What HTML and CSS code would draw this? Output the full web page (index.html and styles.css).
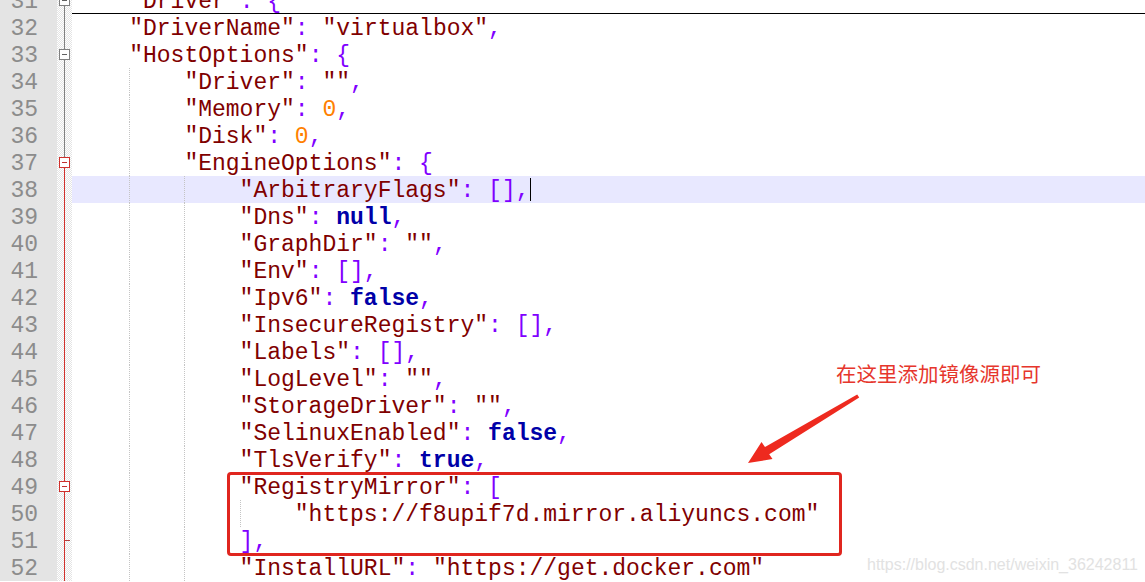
FILE: index.html
```html
<!DOCTYPE html>
<html lang="zh-CN">
<head>
    <meta charset="UTF-8">
    <meta name="viewport" content="width=device-width, initial-scale=1.0">
    <title>config.json - Notepad++</title>
    <link rel="stylesheet" href="styles.css">
</head>
<body>

    <div class="editor">
        <div class="nums">
            <div>31</div><div>32</div><div>33</div><div>34</div><div>35</div>
            <div>36</div><div>37</div><div>38</div><div>39</div><div>40</div>
            <div>41</div><div>42</div><div>43</div><div>44</div><div>45</div>
            <div>46</div><div>47</div><div>48</div><div>49</div><div>50</div>
            <div>51</div><div>52</div>
        </div>

        <div class="folds">
            <div class="fold"><span class="box plus"></span></div>
            <div class="fold"></div>
            <div class="fold"><span class="box"></span></div>
            <div class="fold"></div>
            <div class="fold"></div>
            <div class="fold"></div>
            <div class="fold start"><span class="box red"></span></div>
            <div class="fold hot"></div>
            <div class="fold hot"></div>
            <div class="fold hot"></div>
            <div class="fold hot"></div>
            <div class="fold hot"></div>
            <div class="fold hot"></div>
            <div class="fold hot"></div>
            <div class="fold hot"></div>
            <div class="fold hot"></div>
            <div class="fold hot"></div>
            <div class="fold hot"></div>
            <div class="fold hot"><span class="box red"></span></div>
            <div class="fold hot"></div>
            <div class="fold hot end"></div>
            <div class="fold hot"></div>
        </div>

        <div class="code">
            <div class="line folded"><span class="ind"></span><span class="s">"Driver"</span><span class="o">:</span> <span class="o">{</span></div>
            <div class="line"><span class="ind"></span><span class="s">"DriverName"</span><span class="o">:</span> <span class="s">"virtualbox"</span><span class="o">,</span></div>
            <div class="line"><span class="ind"></span><span class="s">"HostOptions"</span><span class="o">:</span> <span class="o">{</span></div>
            <div class="line"><span class="ind"></span><span class="ind g"></span><span class="s">"Driver"</span><span class="o">:</span> <span class="s">""</span><span class="o">,</span></div>
            <div class="line"><span class="ind"></span><span class="ind g"></span><span class="s">"Memory"</span><span class="o">:</span> <span class="n">0</span><span class="o">,</span></div>
            <div class="line"><span class="ind"></span><span class="ind g"></span><span class="s">"Disk"</span><span class="o">:</span> <span class="n">0</span><span class="o">,</span></div>
            <div class="line"><span class="ind"></span><span class="ind g"></span><span class="s">"EngineOptions"</span><span class="o">:</span> <span class="o">{</span></div>
            <div class="line current"><span class="ind"></span><span class="ind g"></span><span class="ind g"></span><span class="s">"ArbitraryFlags"</span><span class="o">:</span> <span class="o">[],</span><span class="caret"></span></div>
            <div class="line"><span class="ind"></span><span class="ind g"></span><span class="ind g"></span><span class="s">"Dns"</span><span class="o">:</span> <span class="k">null</span><span class="o">,</span></div>
            <div class="line"><span class="ind"></span><span class="ind g"></span><span class="ind g"></span><span class="s">"GraphDir"</span><span class="o">:</span> <span class="s">""</span><span class="o">,</span></div>
            <div class="line"><span class="ind"></span><span class="ind g"></span><span class="ind g"></span><span class="s">"Env"</span><span class="o">:</span> <span class="o">[],</span></div>
            <div class="line"><span class="ind"></span><span class="ind g"></span><span class="ind g"></span><span class="s">"Ipv6"</span><span class="o">:</span> <span class="k">false</span><span class="o">,</span></div>
            <div class="line"><span class="ind"></span><span class="ind g"></span><span class="ind g"></span><span class="s">"InsecureRegistry"</span><span class="o">:</span> <span class="o">[],</span></div>
            <div class="line"><span class="ind"></span><span class="ind g"></span><span class="ind g"></span><span class="s">"Labels"</span><span class="o">:</span> <span class="o">[],</span></div>
            <div class="line"><span class="ind"></span><span class="ind g"></span><span class="ind g"></span><span class="s">"LogLevel"</span><span class="o">:</span> <span class="s">""</span><span class="o">,</span></div>
            <div class="line"><span class="ind"></span><span class="ind g"></span><span class="ind g"></span><span class="s">"StorageDriver"</span><span class="o">:</span> <span class="s">""</span><span class="o">,</span></div>
            <div class="line"><span class="ind"></span><span class="ind g"></span><span class="ind g"></span><span class="s">"SelinuxEnabled"</span><span class="o">:</span> <span class="k">false</span><span class="o">,</span></div>
            <div class="line"><span class="ind"></span><span class="ind g"></span><span class="ind g"></span><span class="s">"TlsVerify"</span><span class="o">:</span> <span class="k">true</span><span class="o">,</span></div>
            <div class="line"><span class="ind"></span><span class="ind g"></span><span class="ind g"></span><span class="s">"RegistryMirror"</span><span class="o">:</span> <span class="o">[</span></div>
            <div class="line"><span class="ind"></span><span class="ind g"></span><span class="ind g"></span><span class="ind g"></span><span class="s">"https://f8upif7d.mirror.aliyuncs.com"</span></div>
            <div class="line"><span class="ind"></span><span class="ind g"></span><span class="ind g"></span><span class="o">],</span></div>
            <div class="line"><span class="ind"></span><span class="ind g"></span><span class="ind g"></span><span class="s">"InstallURL"</span><span class="o">:</span> <span class="s">"https://get.docker.com"</span></div>
        </div>
    </div>

    <!-- annotations drawn over the screenshot -->
    <div class="mark-box"></div>
    <div class="mark-text">在这里添加镜像源即可</div>
    <svg class="mark-arrow" width="130" height="85" viewBox="740 385 130 85">
        <polygon points="748,463 761.5,442 765,447 857.2,394.6 859.2,397.6 769.2,454.2 772.5,459" fill="#ee2a1f"/>
    </svg>
    <div class="watermark">https://blog.csdn.net/weixin_36242811</div>

</body>
</html>
```

FILE: styles.css
```css
* {
    margin: 0;
    padding: 0;
    box-sizing: border-box;
}

body {
    background: #fff;
    width: 1145px;
    height: 582px;
    overflow: hidden;
    position: relative;
    font-family: 'Liberation Mono', 'Courier New', monospace;
    font-size: 23px;
}

.editor {
    display: flex;
    margin-top: -13px;
    line-height: 31px;
}

/* line numbers */
.nums {
    width: 57px;
    background: #e4e4e4;
    color: #8c8c8c;
    text-align: right;
    padding-right: 19px;
}

.nums div {
    height: 27px;
}

/* fold margin */
.folds {
    width: 15px;
    background: repeating-conic-gradient(#e4e4e4 0 25%, #fff 0 50%) 0 0 / 2px 2px;
}

.fold {
    height: 27px;
    display: flex;
    align-items: center;
    justify-content: center;
    background: linear-gradient(#808080, #808080) 7px 0 / 1px 100% no-repeat;
}

.fold.start {
    background: linear-gradient(#808080, #808080) 7px 0 / 1px 50% no-repeat,
                linear-gradient(#d0302c, #d0302c) 7px 100% / 1px 50% no-repeat;
}

.fold.hot {
    background: linear-gradient(#d0302c, #d0302c) 7px 0 / 1px 100% no-repeat;
}

.fold.end {
    background: linear-gradient(#d0302c, #d0302c) 7px 0 / 1px 100% no-repeat,
                linear-gradient(#b04040, #b04040) 7px 13px / 6px 1px no-repeat;
}

.box {
    width: 11px;
    height: 11px;
    border: 1px solid #808080;
    background: #fff linear-gradient(#606060, #606060) center / 5px 1px no-repeat;
}

.box.plus {
    background: #fff linear-gradient(#606060, #606060) center / 5px 1px no-repeat,
                linear-gradient(#606060, #606060) center / 1px 5px no-repeat;
}

.box.red {
    border-color: #d0302c;
    background: #fff linear-gradient(#c03030, #c03030) center / 5px 1px no-repeat;
}

/* code area */
.code {
    flex: 1;
    padding-left: 2px;
}

.line {
    height: 27px;
    color: #800000;
    white-space: pre;
}

.line.folded {
    border-bottom: 1px solid #000;
    margin-left: -2px;
    padding-left: 2px;
}

.line.current {
    background: #e8e8ff;
    margin-left: -2px;
    padding-left: 2px;
}

.ind {
    display: inline-block;
    width: 4ch;
    height: 27px;
    vertical-align: top;
}

.ind.g {
    background: repeating-linear-gradient(#c4c4c4 0 1px, transparent 1px 2px) 0 0 / 1px 100% no-repeat;
}

.s { color: #800000; }
.o { color: #8000ff; }
.n { color: #ff8000; }
.k { color: #0000a8; font-weight: bold; }

.caret {
    display: inline-block;
    width: 1px;
    height: 23px;
    margin-top: 2px;
    vertical-align: top;
    background: #000;
}

/* annotations */
.mark-box {
    position: absolute;
    left: 227px;
    top: 472px;
    width: 615px;
    height: 84px;
    border: 3px solid #e0261f;
    border-radius: 4px;
}

.mark-text {
    position: absolute;
    left: 836px;
    top: 362px;
    font-family: 'Noto Sans CJK SC', sans-serif;
    font-size: 20.5px;
    line-height: 22px;
    color: #e6362c;
}

.mark-arrow {
    position: absolute;
    left: 740px;
    top: 385px;
}

.watermark {
    position: absolute;
    left: 867px;
    top: 556px;
    font-family: 'Liberation Sans', Arial, sans-serif;
    font-size: 16px;
    line-height: 18px;
    color: #e2e2e2;
    white-space: nowrap;
}
```
